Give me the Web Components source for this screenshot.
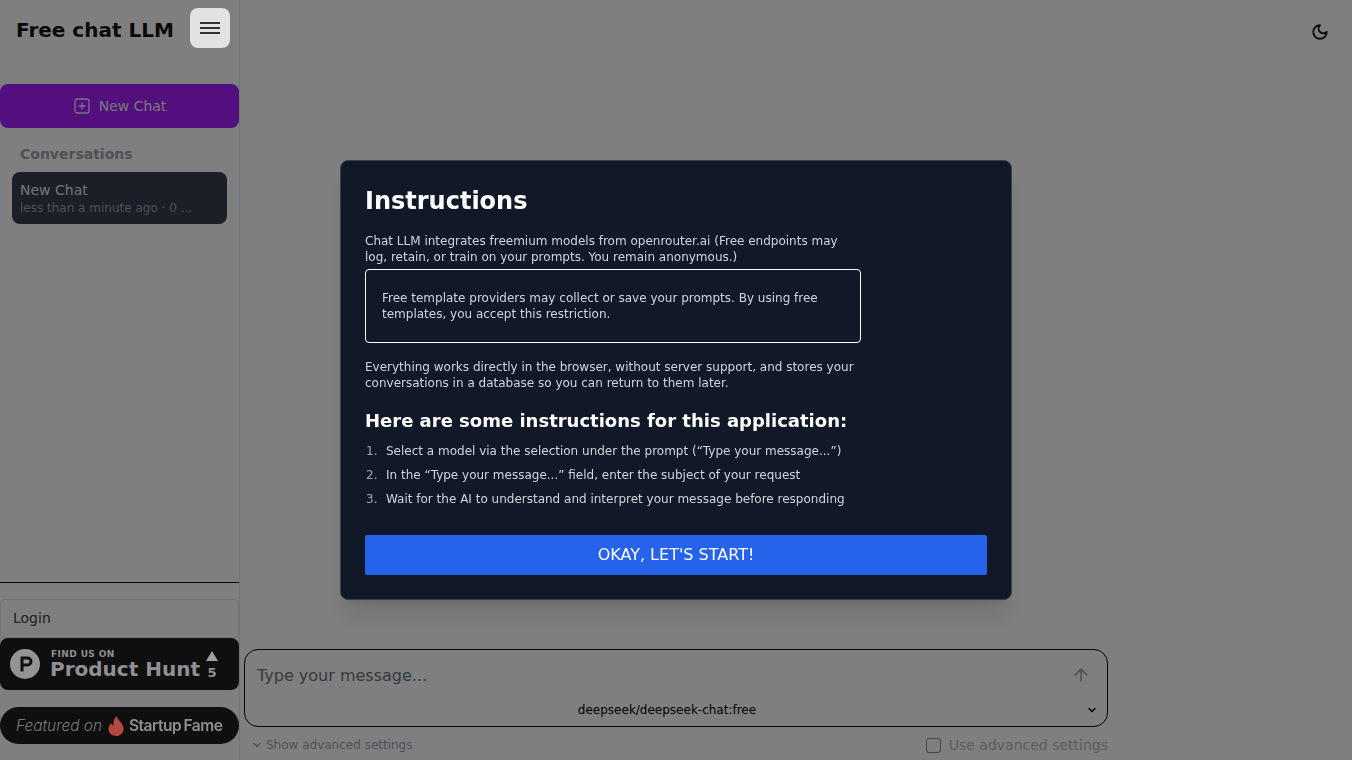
<!DOCTYPE html>
<html lang="en">
<head>
<meta charset="utf-8">
<title>Free chat LLM</title>
<style>
html, body { margin: 0; height: 100%; }
body {
  font-family: "DejaVu Sans", sans-serif;
  background: #fff;
  color: #111827;
  overflow: hidden;
}
</style>
</head>
<body>
<app-shell>
  <side-bar slot="side"></side-bar>
  <chat-main slot="main"></chat-main>
</app-shell>
<instructions-modal></instructions-modal>

<script>
class AppShell extends HTMLElement {
  constructor() {
    super();
    const shadowRoot = this.attachShadow({mode: 'open'});
    shadowRoot.innerHTML = `
<style>
:host {
  display: grid;
  grid-template-columns: 240px 1fr;
  width: 100vw;
  height: 100vh;
}
</style>
<slot name="side"></slot>
<slot name="main"></slot>
`;
  }
}

class SideBar extends HTMLElement {
  constructor() {
    super();
    const shadowRoot = this.attachShadow({mode: 'open'});
    shadowRoot.innerHTML = `
<style>
:host {
  display: flex;
  flex-direction: column;
  height: 760px;
  box-sizing: border-box;
  border-right: 1px solid #e5e7eb;
}
header {
  display: flex;
  align-items: center;
  justify-content: space-between;
  height: 40px;
  padding: 8px 9px 0 16px;
}
h1 {
  margin: 0;
  padding-top: 4px;
  font-size: 20px;
  line-height: 40px;
  font-weight: 700;
  color: #111;
}
.menu {
  position: relative;
  z-index: 60;
  width: 40px;
  height: 40px;
  display: flex;
  align-items: center;
  justify-content: center;
  background: #e2e2e2;
  border-radius: 8px;
}
.new {
  display: flex;
  align-items: center;
  justify-content: center;
  gap: 8px;
  height: 44px;
  margin-top: 36px;
  padding-left: 1px;
  background: #a81ffc;
  border-radius: 8px;
  color: #f3e8ff;
  font-size: 14px;
}
h2 {
  margin: 16px 0 0 20px;
  font-size: 14px;
  line-height: 20px;
  font-weight: 700;
  color: #9ca3af;
}
.chat {
  margin: 8px 12px 0;
  height: 52px;
  box-sizing: border-box;
  padding: 8px;
  background: #363e4e;
  border-radius: 8px;
}
.chat .t { font-size: 14px; line-height: 20px; color: #e5e7eb; }
.chat .s { font-size: 12px; line-height: 16px; color: #9aa1ad; white-space: nowrap; }
.foot {
  margin-top: auto;
  border-top: 1px solid #000;
  padding: 16px 0;
}
.login {
  height: 39px;
  box-sizing: border-box;
  display: flex;
  align-items: center;
  padding: 0 0 2px 12px;
  border: 1px solid #e5e7eb;
  border-radius: 4px;
  font-size: 14px;
  color: #374151;
}
</style>
<header>
  <h1>Free chat LLM</h1>
  <div class="menu">
    <svg width="24" height="24" viewBox="0 0 24 24" fill="none" stroke="#333" stroke-width="2"><path d="M2 7h20M2 12h20M2 17h20"/></svg>
  </div>
</header>
<div class="new">
  <svg width="16" height="16" viewBox="0 0 16 16" fill="none" stroke="currentColor" stroke-width="1.3"><rect x="1" y="1" width="14" height="14" rx="2"/><path d="M8 4.5v7M4.5 8h7"/></svg>
  <span style="margin-left:1px">New Chat</span>
</div>
<h2>Conversations</h2>
<div class="chat">
  <div class="t">New Chat</div>
  <div class="s">less than a minute ago · 0 ...</div>
</div>
<div class="foot">
  <div class="login">Login</div>
  <producthunt-badge></producthunt-badge>
  <startup-fame-badge></startup-fame-badge>
</div>
`;
  }
}

class ProducthuntBadge extends HTMLElement {
  constructor() {
    super();
    const shadowRoot = this.attachShadow({mode: 'open'});
    shadowRoot.innerHTML = `
<style>
:host {
  position: relative;
  z-index: 60;
  display: flex;
  align-items: center;
  height: 52px;
  background: #0f0f10;
  border-radius: 8px;
  color: #8f8f94;
}
.logo { margin-left: 10px; flex: none; }
.txt { margin-left: 10px; padding-bottom: 2px; }
.a { font-size: 9px; line-height: 10px; font-weight: 700; letter-spacing: .4px; margin: 1px 0 0 1px; }
.b { font-size: 20px; line-height: 20px; font-weight: 700; }
.v { margin-left: 6px; display: flex; flex-direction: column; align-items: center; gap: 5px; padding-top: 2px; }
.v i { width: 0; height: 0; border: 6px solid transparent; border-top: 0; border-bottom: 10px solid #a0a0a3; }
.v span { font-size: 13px; line-height: 13px; font-weight: 700; }
</style>
<svg class="logo" width="30" height="30" viewBox="0 0 30 30"><circle cx="15" cy="15" r="15" fill="#949494"/><path d="M10.500 7.500h7a5 5 0 0 1 0 10H13.500v5h-3z M13.500 10.500v4h4a2 2 0 0 0 0-4z" fill="#0f0f10" fill-rule="evenodd"/></svg>
<div class="txt">
  <div class="a">FIND US ON</div>
  <div class="b">Product Hunt</div>
</div>
<div class="v"><i></i><span>5</span></div>
`;
  }
}

class StartupFameBadge extends HTMLElement {
  constructor() {
    super();
    const shadowRoot = this.attachShadow({mode: 'open'});
    shadowRoot.innerHTML = `
<style>
:host {
  position: relative;
  z-index: 60;
  display: flex;
  align-items: center;
  height: 37px;
  margin-top: 17px;
  padding-left: 16px;
  background: #0f0f10;
  border-radius: 18.5px;
  color: #8f8f8f;
  white-space: nowrap;
}
.f { font-family: Inter, sans-serif; font-style: italic; font-size: 15.4px; font-weight: 300; color: #7a7a7a; }
svg { margin: 0 5px 0 6px; flex: none; }
.s { font-family: Inter, sans-serif; font-weight: 600; font-size: 15.500px; letter-spacing: -.5px; word-spacing: -1px; }
</style>
<span class="f">Featured on</span>
<svg width="16" height="20" viewBox="0 0 16 20"><path d="M8.500 0C9.300 3.500 14.500 6.500 15.500 12c.6 4.500-3 8-7.500 8S.1 16.500.6 12.200C1 9.500 2.300 8 3.300 7c.2 1.600.9 2.600 2 3C4.900 6 6.300 2.500 8.500 0z" fill="#b5473f"/></svg>
<span class="s">Startup Fame</span>
`;
  }
}

class ChatMain extends HTMLElement {
  constructor() {
    super();
    const shadowRoot = this.attachShadow({mode: 'open'});
    shadowRoot.innerHTML = `
<style>
:host {
  display: flex;
  flex-direction: column;
  height: 760px;
  min-width: 0;
}
.top {
  display: flex;
  justify-content: flex-end;
  padding: 23px 23px 0 0;
}
.bottom {
  margin-top: auto;
  margin-left: 4px;
  width: 864px;
}
.box {
  box-sizing: border-box;
  height: 78px;
  border: 1px solid #000;
  border-radius: 14px;
  padding: 0 12px;
}
.row {
  display: flex;
  align-items: center;
  justify-content: space-between;
  height: 50px;
}
.ph { font-size: 16px; color: #6b7280; }
.arrow { margin-right: 4px; }
.model {
  position: relative;
  text-align: center;
  font-size: 12px;
  line-height: 16px;
  margin-top: 2px;
  padding-right: 18px;
  color: #000;
}
.model svg { position: absolute; right: -3px; top: 2px; }
.under {
  display: flex;
  justify-content: space-between;
  align-items: center;
  box-sizing: border-box;
  height: 33px;
  padding: 3px 0 0 7px;
}
.show { display: flex; align-items: center; gap: 3px; font-size: 12px; color: #9ca3af; }
.use { display: flex; align-items: center; gap: 8px; font-size: 14px; color: #b6bac2; }
.cb { width: 13px; height: 13px; border: 1.5px solid #8a8a8a; border-radius: 3px; }
</style>
<div class="top">
  <svg width="18" height="18" viewBox="0 0 24 24" fill="none" stroke="#111" stroke-width="2.400" stroke-linecap="round" stroke-linejoin="round"><path d="M12 3a6 6 0 0 0 9 9 9 9 0 1 1-9-9Z"/></svg>
</div>
<div class="bottom">
  <div class="box">
    <div class="row">
      <span class="ph">Type your message...</span>
      <svg class="arrow" width="20" height="20" viewBox="0 0 24 24" fill="none" stroke="#9ca3af" stroke-width="2" stroke-linecap="round" stroke-linejoin="round"><path d="M12 19V5M5 12l7-7 7 7"/></svg>
    </div>
    <div class="model">deepseek/deepseek-chat:free
      <svg width="12" height="12" viewBox="0 0 24 24" fill="none" stroke="#000" stroke-width="3" stroke-linecap="round" stroke-linejoin="round"><path d="m6 9 6 6 6-6"/></svg>
    </div>
  </div>
  <div class="under">
    <div class="show">
      <svg width="12" height="12" viewBox="0 0 24 24" fill="none" stroke="#9ca3af" stroke-width="3" stroke-linecap="round" stroke-linejoin="round"><path d="m6 9 6 6 6-6"/></svg>
      <span>Show advanced settings</span>
    </div>
    <div class="use"><span class="cb"></span><span>Use advanced settings</span></div>
  </div>
</div>
`;
  }
}

class InstructionsModal extends HTMLElement {
  constructor() {
    super();
    const shadowRoot = this.attachShadow({mode: 'open'});
    shadowRoot.innerHTML = `
<style>
:host {
  position: fixed;
  inset: 0;
  z-index: 50;
  display: flex;
  align-items: center;
  justify-content: center;
  background: rgba(0, 0, 0, .5);
}
.dialog {
  box-sizing: border-box;
  width: 672px;
  height: 440px;
  padding: 24px;
  background: #111827;
  border: 1px solid #374151;
  border-radius: 8px;
  box-shadow: 0 20px 25px -5px rgba(0,0,0,.1), 0 8px 10px -6px rgba(0,0,0,.1);
  color: #fff;
  display: flex;
  flex-direction: column;
}
h1 { margin: 0; font-size: 24px; line-height: 32px; font-weight: 700; }
.prose { max-width: 496px; font-size: 12px; line-height: 16px; color: #d1d5db; }
p { margin: 0; }
.first { margin-top: 16px; }
.note {
  box-sizing: border-box;
  height: 74px;
  margin-top: 4px;
  padding: 20px 16px;
  border: 1px solid #fff;
  border-radius: 4px;
}
.second { margin-top: 16px; }
h2 { margin: 16px 0 0; font-size: 18px; line-height: 28px; font-weight: 700; }
ol { margin: 8px 0 0; padding: 0; list-style: none; counter-reset: step; }
li { display: flex; height: 16px; margin-bottom: 8px; white-space: nowrap; counter-increment: step; }
li::before { content: counter(step) "."; flex: none; box-sizing: border-box; width: 21px; padding-left: 1px; color: #9ca3af; }
button {
  margin-top: auto;
  height: 40px;
  padding: 0 0 2px;
  border: 0;
  border-radius: 2px;
  background: #2563eb;
  color: #fff;
  font: 16px "DejaVu Sans", sans-serif;
}
</style>
<div class="dialog">
  <h1>Instructions</h1>
  <div class="prose">
    <p class="first">Chat LLM integrates freemium models from openrouter.ai (Free endpoints may log, retain, or train on your prompts. You remain anonymous.)</p>
    <div class="note">Free template providers may collect or save your prompts. By using free templates, you accept this restriction.</div>
    <p class="second">Everything works directly in the browser, without server support, and stores your conversations in a database so you can return to them later.</p>
  </div>
  <h2>Here are some instructions for this application:</h2>
  <ol class="prose">
    <li>Select a model via the selection under the prompt (“Type your message...”)</li>
    <li>In the “Type your message...” field, enter the subject of your request</li>
    <li>Wait for the AI to understand and interpret your message before responding</li>
  </ol>
  <button>OKAY, LET'S START!</button>
</div>
`;
  }
}

customElements.define('app-shell', AppShell);
customElements.define('side-bar', SideBar);
customElements.define('producthunt-badge', ProducthuntBadge);
customElements.define('startup-fame-badge', StartupFameBadge);
customElements.define('chat-main', ChatMain);
customElements.define('instructions-modal', InstructionsModal);
</script>
</body>
</html>
